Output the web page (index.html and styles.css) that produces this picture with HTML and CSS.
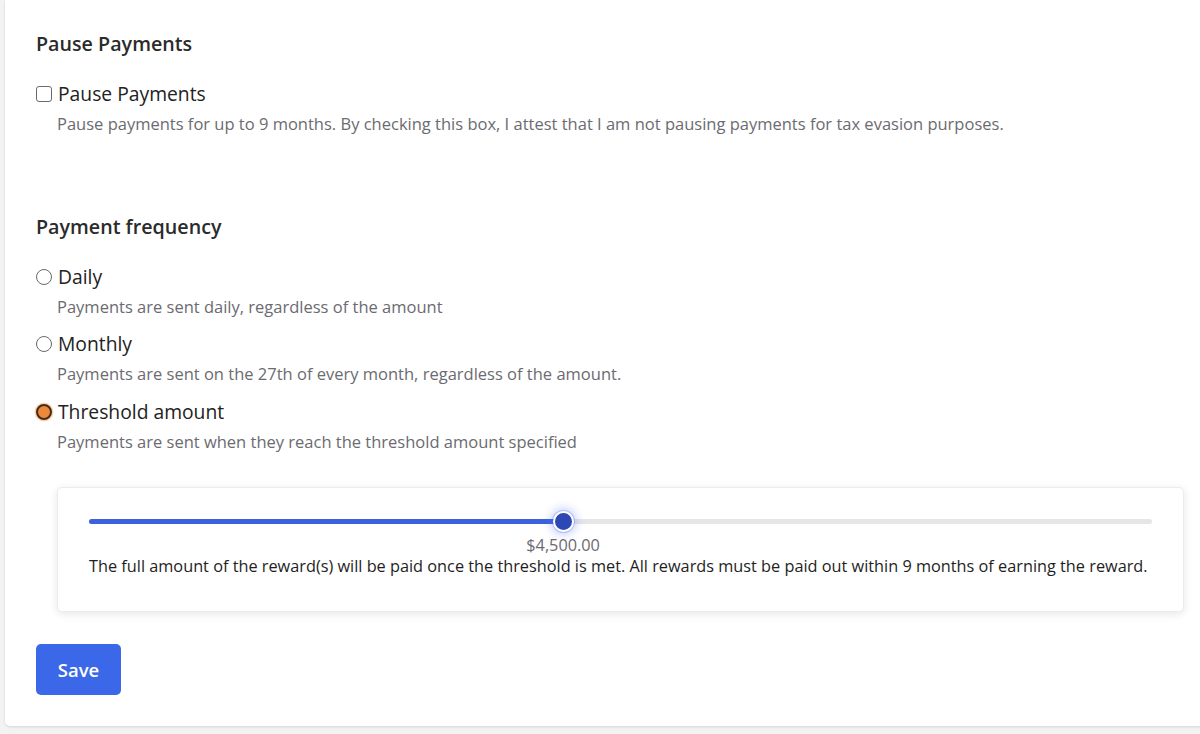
FILE: index.html
```html
<!DOCTYPE html>
<html lang="en">
<head>
<meta charset="utf-8">
<title>Payment settings</title>
<link rel="stylesheet" href="styles.css">
</head>
<body>
<div class="page">
  <div class="card">
    <section class="group">
      <h2 class="heading">Pause Payments</h2>
      <label class="option">
        <span class="box"></span>
        <span class="label">Pause Payments</span>
      </label>
      <p class="desc">Pause payments for up to 9 months. By checking this box, I attest that I am not pausing payments for tax evasion purposes.</p>
    </section>

    <section class="group freq">
      <h2 class="heading">Payment frequency</h2>
      <label class="option">
        <span class="radio"></span>
        <span class="label">Daily</span>
      </label>
      <p class="desc">Payments are sent daily, regardless of the amount</p>
      <label class="option next">
        <span class="radio"></span>
        <span class="label">Monthly</span>
      </label>
      <p class="desc">Payments are sent on the 27th of every month, regardless of the amount.</p>
      <label class="option next last">
        <span class="radio checked"></span>
        <span class="label">Threshold amount</span>
      </label>
      <p class="desc">Payments are sent when they reach the threshold amount specified</p>

      <div class="panel">
        <div class="slider">
          <div class="track">
            <div class="fill" style="width: 44.6%"></div>
            <div class="thumb" style="left: 44.6%"></div>
          </div>
          <div class="value" style="left: 44.6%">$4,500.00</div>
        </div>
        <p class="note">The full amount of the reward(s) will be paid once the threshold is met. All rewards must be paid out within 9 months of earning the reward.</p>
      </div>
    </section>

    <button class="save" type="button">Save</button>
  </div>
</div>
</body>
</html>
```

FILE: styles.css
```css
* { box-sizing: border-box; }

html, body {
  margin: 0;
  padding: 0;
  background: #f3f3f4;
  font-family: "Open Sans", "Noto Sans", sans-serif;
}

.page {
  padding: 0 0 8px 5px;
  height: 734px;
  overflow: hidden;
}

.card {
  background: #ffffff;
  height: 726px;
  width: 1210px;
  border-radius: 0 0 0 5px;
  box-shadow: 0 1px 3px rgba(0, 0, 0, 0.12);
  padding: 30px 0 0 31px;
}

.heading {
  margin: 0;
  font-size: 19.7px;
  line-height: 28px;
  font-weight: 600;
  color: #2b2b2b;
}

.freq {
  margin-top: 78px;
}

.option {
  display: flex;
  align-items: center;
  gap: 6px;
  height: 24px;
  margin-top: 24px;
}

.option.next {
  margin-top: 14px;
}

.option.last {
  margin-top: 15px;
}

.label {
  font-size: 19.3px;
  line-height: 24px;
  color: #222;
}

.box {
  width: 16px;
  height: 16px;
  border: 1.5px solid #6a6a6a;
  border-radius: 3px;
  background: #fff;
}

.radio {
  width: 16px;
  height: 16px;
  border: 1.5px solid #6a6a6a;
  border-radius: 50%;
  background: #fff;
}

.radio.checked {
  border: 2.5px solid #4a2a14;
  background: #ec8a3c;
  box-shadow: 0 0 0 1.5px rgba(236, 138, 60, 0.35);
}

.desc {
  margin: 7px 0 0 21px;
  font-size: 16.5px;
  line-height: 22px;
  color: #6b6b70;
}

.panel {
  margin: 34px 16px 0 21px;
  width: 1127px;
  height: 125px;
  background: #fff;
  border-radius: 5px;
  border: 1px solid #ececec;
  box-shadow: 0 2px 8px rgba(0, 0, 0, 0.10);
  padding: 30px 31px 0 31px;
}

.slider {
  position: relative;
  height: 36px;
}

.track {
  position: relative;
  height: 5px;
  border-radius: 3px;
  background: #e6e6e8;
  margin-top: 1px;
}

.fill {
  height: 5px;
  border-radius: 3px;
  background: #3b62dc;
}

.thumb {
  position: absolute;
  top: 50%;
  width: 21px;
  height: 21px;
  margin: -10.5px 0 0 -10.5px;
  border-radius: 50%;
  background: #2b48b4;
  border: 2.5px solid #fff;
  box-shadow: 0 0 0 1px rgba(60, 90, 230, 0.25), 0 0 8px 3px rgba(80, 110, 240, 0.30);
}

.value {
  position: absolute;
  top: 15px;
  transform: translateX(-50%);
  font-size: 16.3px;
  line-height: 22px;
  color: #6b6b70;
  white-space: nowrap;
}

.note {
  margin: 0;
  font-size: 16.3px;
  line-height: 22px;
  color: #1e1e1e;
  white-space: nowrap;
}

.save {
  display: block;
  margin-top: 32px;
  width: 85px;
  height: 51px;
  border: none;
  border-radius: 5px;
  background: #3b68e8;
  color: #fff;
  font-family: inherit;
  font-size: 18.5px;
  font-weight: 600;
  cursor: pointer;
}
```
